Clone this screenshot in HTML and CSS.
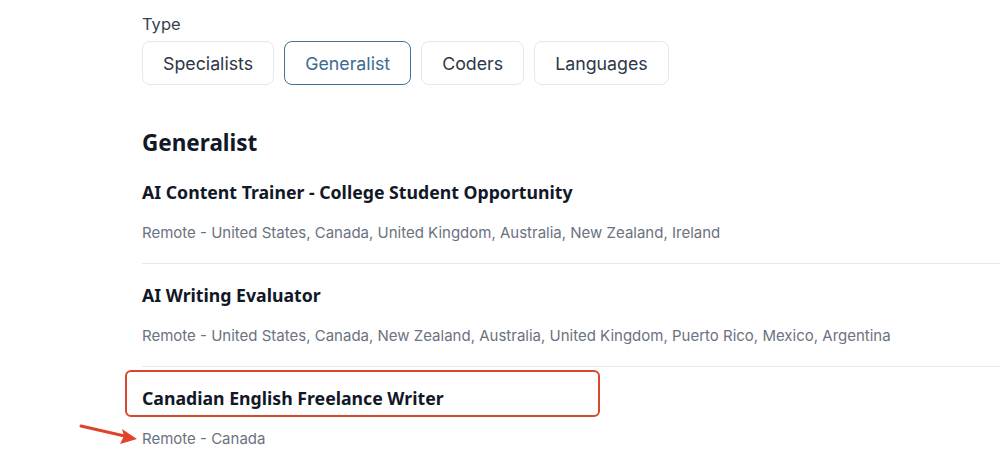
FILE: index.html
```html
<!DOCTYPE html>
<html>
<head>
<meta charset="utf-8">
<link rel="stylesheet" href="styles.css">
</head>
<body>
<main class="page">
  <section class="filter">
    <div class="filter-label">Type</div>
    <div class="tabs">
      <button class="tab">Specialists</button>
      <button class="tab active">Generalist</button>
      <button class="tab">Coders</button>
      <button class="tab">Languages</button>
    </div>
  </section>
  <section class="jobs">
    <h2 class="jobs-title">Generalist</h2>
    <ul class="job-list">
      <li class="job">
        <h3 class="job-title">AI Content Trainer - College Student Opportunity</h3>
        <p class="job-meta">Remote - United States, Canada, United Kingdom, Australia, New Zealand, Ireland</p>
      </li>
      <li class="job">
        <h3 class="job-title">AI Writing Evaluator</h3>
        <p class="job-meta">Remote - United States, Canada, New Zealand, Australia, United Kingdom, Puerto Rico, Mexico, Argentina</p>
      </li>
      <li class="job highlighted">
        <h3 class="job-title">Canadian English Freelance Writer</h3>
        <p class="job-meta">Remote - Canada</p>
        <span class="highlight-box"></span>
        <svg class="arrow" width="70" height="30" viewBox="0 0 70 30">
          <line x1="2" y1="4" x2="50" y2="15" stroke="#e0432b" stroke-width="3" stroke-linecap="round"/>
          <polygon points="58,17 41,22 45,14 43,7" fill="#e0432b"/>
        </svg>
      </li>
    </ul>
  </section>
</main>
</body>
</html>
```
FILE: styles.css
```css
html, body {
  margin: 0;
  padding: 0;
  background: #ffffff;
}
body {
  font-family: Inter, "Liberation Sans", sans-serif;
  color: #1f2937;
}
.page {
  padding: 14px 0 0 142px;
}
.filter-label {
  font-size: 16.5px;
  color: #374151;
  line-height: 20px;
}
.tabs {
  display: flex;
  gap: 10px;
  margin-top: 7px;
}
.tab {
  font-family: Inter, "Liberation Sans", sans-serif;
  font-size: 17.8px;
  color: #2d3748;
  background: #fff;
  border: 1px solid #e5e7eb;
  border-radius: 8px;
  height: 44px;
  padding: 0 20px;
  cursor: pointer;
}
.tab.active {
  border-color: #3f7397;
  color: #3b6a8f;
}
.jobs-title {
  font-family: "Noto Sans", "Open Sans", sans-serif;
  font-weight: 700;
  font-size: 22.5px;
  color: #111827;
  margin: 43px 0 0;
  line-height: 30px;
}
.job-list {
  list-style: none;
  margin: 0;
  padding: 0;
}
.job {
  position: relative;
  padding: 18px 0 20px;
  border-bottom: 1px solid #e9e9ea;
}
.job:first-child {
  padding-top: 21px;
}
.job:last-child {
  border-bottom: none;
}
.job-title {
  font-family: "Noto Sans", "Open Sans", sans-serif;
  font-weight: 700;
  font-size: 17.7px;
  line-height: 26px;
  color: #111827;
  margin: 0;
}
.job-meta {
  font-size: 15px;
  line-height: 20px;
  color: #6b7280;
  margin: 18px 0 0;
}
.highlight-box {
  position: absolute;
  left: -17px;
  top: 3px;
  width: 471px;
  height: 43px;
  border: 2px solid #d8472f;
  border-radius: 6px;
}
.arrow {
  position: absolute;
  left: -63px;
  top: 55px;
}
```
